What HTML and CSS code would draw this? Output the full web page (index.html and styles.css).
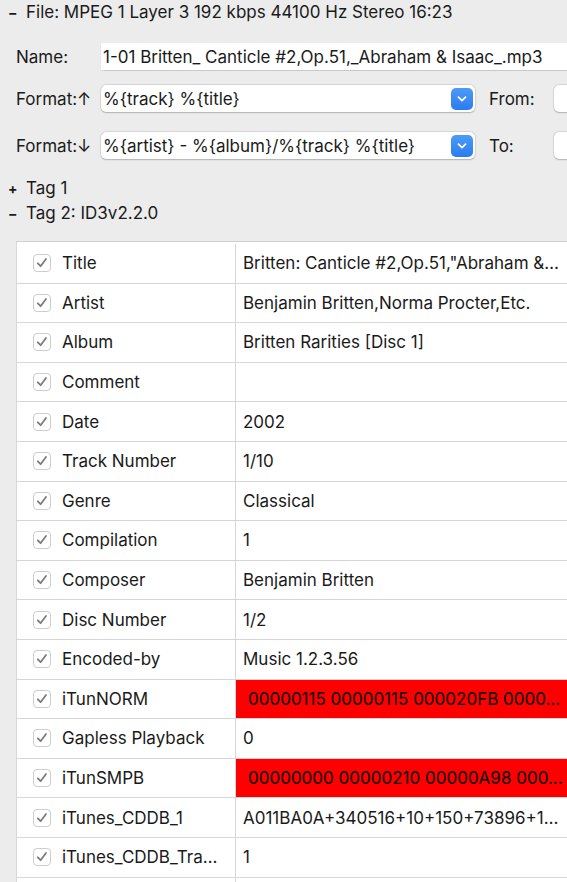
FILE: index.html
```html
<!DOCTYPE html>
<html>
<head>
<meta charset="utf-8">
<link rel="stylesheet" href="styles.css">
</head>
<body>
<div class="page">
  <div class="disclosure file-head"><span class="tog">−</span><span>File: MPEG 1 Layer 3 192 kbps 44100 Hz Stereo 16:23</span></div>

  <div class="frow r-name">
    <span class="lbl">Name:</span>
    <div class="field wide">1-01 Britten_ Canticle #2,Op.51,_Abraham &amp; Isaac_.mp3</div>
  </div>
  <div class="frow r-fmt1">
    <span class="lbl">Format:↑</span>
    <div class="field combo"><span class="ctext">%{track} %{title}</span><span class="cbtn"><svg width="12" height="8" viewBox="0 0 12 8"><path d="M2.5 2.2 L6 5.6 L9.5 2.2" fill="none" stroke="#fff" stroke-width="1.8" stroke-linecap="round" stroke-linejoin="round"/></svg></span></div>
    <span class="lbl2">From:</span>
    <div class="field stub"></div>
  </div>
  <div class="frow r-fmt2">
    <span class="lbl">Format:↓</span>
    <div class="field combo"><span class="ctext">%{artist} - %{album}/%{track} %{title}</span><span class="cbtn"><svg width="12" height="8" viewBox="0 0 12 8"><path d="M2.5 2.2 L6 5.6 L9.5 2.2" fill="none" stroke="#fff" stroke-width="1.8" stroke-linecap="round" stroke-linejoin="round"/></svg></span></div>
    <span class="lbl2">To:</span>
    <div class="field stub"></div>
  </div>

  <div class="disclosure tag1"><span class="tog">+</span><span>Tag 1</span></div>
  <div class="disclosure tag2"><span class="tog">−</span><span>Tag 2: ID3v2.2.0</span></div>

  <div class="table">
    <div class="row"><div class="c1"><span class="cb"></span>Title</div><div class="c2">Britten: Canticle #2,Op.51,"Abraham &amp;…</div></div>
    <div class="row"><div class="c1"><span class="cb"></span>Artist</div><div class="c2">Benjamin Britten,Norma Procter,Etc.</div></div>
    <div class="row"><div class="c1"><span class="cb"></span>Album</div><div class="c2">Britten Rarities [Disc 1]</div></div>
    <div class="row"><div class="c1"><span class="cb"></span>Comment</div><div class="c2"></div></div>
    <div class="row"><div class="c1"><span class="cb"></span>Date</div><div class="c2">2002</div></div>
    <div class="row"><div class="c1"><span class="cb"></span>Track Number</div><div class="c2">1/10</div></div>
    <div class="row"><div class="c1"><span class="cb"></span>Genre</div><div class="c2">Classical</div></div>
    <div class="row"><div class="c1"><span class="cb"></span>Compilation</div><div class="c2">1</div></div>
    <div class="row"><div class="c1"><span class="cb"></span>Composer</div><div class="c2">Benjamin Britten</div></div>
    <div class="row"><div class="c1"><span class="cb"></span>Disc Number</div><div class="c2">1/2</div></div>
    <div class="row"><div class="c1"><span class="cb"></span>Encoded-by</div><div class="c2">Music 1.2.3.56</div></div>
    <div class="row"><div class="c1"><span class="cb"></span>iTunNORM</div><div class="c2 red">00000115 00000115 000020FB 0000…</div></div>
    <div class="row"><div class="c1"><span class="cb"></span>Gapless Playback</div><div class="c2">0</div></div>
    <div class="row"><div class="c1"><span class="cb"></span>iTunSMPB</div><div class="c2 red">00000000 00000210 00000A98 000…</div></div>
    <div class="row"><div class="c1"><span class="cb"></span>iTunes_CDDB_1</div><div class="c2">A011BA0A+340516+10+150+73896+1…</div></div>
    <div class="row"><div class="c1"><span class="cb"></span>iTunes_CDDB_Tra…</div><div class="c2">1</div></div>
    <div class="row"><div class="c1"></div><div class="c2"></div></div>
  </div>
</div>
</body>
</html>
```
FILE: styles.css
```css
html, body {
  margin: 0;
  padding: 0;
  background: #ececec;
  overflow: hidden;
}
body {
  width: 567px;
  height: 882px;
  font-family: Inter, "Liberation Sans", sans-serif;
  font-size: 17px;
  color: #1a1a1a;
}
.page {
  width: 567px;
  height: 882px;
  overflow: hidden;
}
.disclosure {
  display: flex;
  align-items: center;
  height: 24px;
  white-space: nowrap;
}
.tog {
  width: 26px;
  padding-left: 8px;
  box-sizing: border-box;
  font-weight: 700;
  font-size: 14px;
}
.file-head { margin-top: 0; }
.frow {
  display: flex;
  align-items: center;
  height: 27px;
  padding-left: 16px;
  white-space: nowrap;
}
.r-name { margin-top: 19px; }
.r-fmt1 { margin-top: 15px; }
.r-fmt2 { margin-top: 20px; }
.lbl {
  width: 85px;
  flex: none;
}
.field {
  height: 27px;
  background: #fff;
  border-radius: 5px;
  box-shadow: 0 0 0 0.5px rgba(0,0,0,0.12), 0 0.5px 1.5px rgba(0,0,0,0.2);
  box-sizing: border-box;
  display: flex;
  align-items: center;
  padding-left: 2px;
  flex: none;
}
.wide {
  width: 480px;
  border-radius: 0;
  box-shadow: 0 0.5px 1px rgba(0,0,0,0.15);
}
.combo {
  width: 374px;
  justify-content: space-between;
  padding-right: 2px;
}
.cbtn {
  width: 22px;
  height: 22px;
  border-radius: 5px;
  background: linear-gradient(#4d9bf7, #2a7cf0);
  display: flex;
  align-items: center;
  justify-content: center;
}
.lbl2 {
  width: 79px;
  padding-left: 14px;
  box-sizing: border-box;
  flex: none;
}
.stub {
  width: 60px;
}
.tag1 { margin-top: 17px; }
.tag2 { margin-top: 1px; }
.table {
  margin-top: 16px;
  margin-left: 16px;
  width: 600px;
  background: #fff;
  border-top: 1px solid #cfcfcf;
  border-left: 1px solid #d8d8d8;
  padding-top: 2px;
}
.row {
  display: flex;
  height: 39.6px;
  box-sizing: border-box;
  border-bottom: 1px solid #d6d6d6;
}
.c1 {
  width: 219px;
  flex: none;
  display: flex;
  align-items: center;
  border-right: 1.5px solid #d6d6d6;
  box-sizing: border-box;
  padding-left: 16px;
  white-space: nowrap;
}
.cb {
  width: 18px;
  height: 18px;
  border: 1px solid #cdcdcd;
  border-radius: 4px;
  box-sizing: border-box;
  margin-right: 11px;
  background: #fff url("data:image/svg+xml;utf8,<svg xmlns='http://www.w3.org/2000/svg' width='16' height='16' viewBox='0 0 16 16'><path d='M3.8 8.3 L6.6 11.2 L12 4' fill='none' stroke='%237d7d7d' stroke-width='1.8' stroke-linecap='round' stroke-linejoin='round'/></svg>") center/16px 16px no-repeat;
  flex: none;
}
.c2 {
  flex: 1;
  display: flex;
  align-items: center;
  padding-left: 7px;
  white-space: nowrap;
}
.c2.red {
  background: #ff0000;
  padding-left: 12px;
  color: #000;
}
```
